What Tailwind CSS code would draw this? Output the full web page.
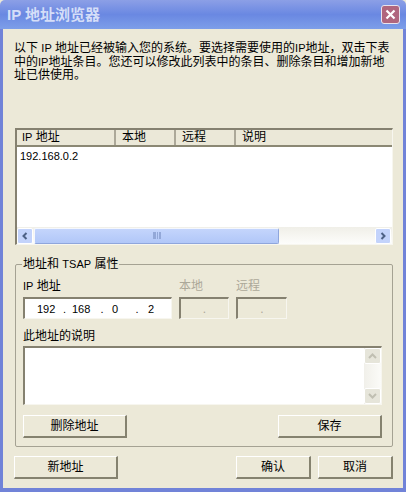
<!DOCTYPE html>
<html lang="zh">
<head>
    <meta charset="UTF-8">
    <meta name="viewport" content="width=device-width, initial-scale=1.0">
    <title>IP 地址浏览器</title>
    <script src="https://cdn.jsdelivr.net/npm/@tailwindcss/browser@4"></script>
</head>
<body class="bg-[#ece9d8] font-['Liberation_Sans','Noto_Sans_CJK_SC',sans-serif] text-[12px] leading-[14px] text-black">
    <div class="w-[406px] h-[492px] flex flex-col overflow-hidden">
        <!-- title bar -->
        <div class="h-[29px] shrink-0 flex items-center pl-[7px] pr-[6px] justify-between rounded-t-[5px] bg-gradient-to-b from-[#8c9fe6] via-[#6a88e2] to-[#7d9ee9]">
            <span class="text-[15px] font-bold text-[#d5def8] leading-[18px] whitespace-nowrap">IP 地址浏览器</span>
            <div class="w-[19px] h-[19px] rounded-[3px] border border-[#e8e4ee] bg-[#b0667e] flex items-center justify-center">
                <svg width="11" height="11" viewBox="0 0 11 11"><path d="M1.5 1.5l8 8M9.5 1.5l-8 8" stroke="#fff" stroke-width="2.2" fill="none"/></svg>
            </div>
        </div>

        <!-- client area -->
        <div class="flex-1 flex flex-col border-x-[3px] border-b-[4px] border-[#7183d8] pl-[11px] pr-[10px] pt-[13px]">
            <p class="whitespace-nowrap leading-[13.5px] h-[86px]">以下 <span class="text-[11px]">IP</span> 地址已经被输入您的系统。要选择需要使用的<span class="text-[11px]">IP</span>地址，双击下表<br>中的<span class="text-[11px]">IP</span>地址条目。您还可以修改此列表中的条目、删除条目和增加新地<br>址已供使用。</p>

            <!-- list -->
            <div class="ml-[1px] w-[378px] h-[117px] shrink-0 flex flex-col bg-white border-t-2 border-l-2 border-t-[#858170] border-l-[#858170] border-r border-b border-r-[#f7f6ef] border-b-[#f7f6ef]">
                <div class="h-[17px] shrink-0 flex bg-[#ebe8d8] border-b-2 border-[#8b8874]">
                    <div class="w-[99px] pl-[5px] border-r-2 border-[#aca899] leading-[15px]"><span class="text-[11px]">IP</span> 地址</div>
                    <div class="w-[60px] pl-[6px] border-r-2 border-[#aca899] leading-[15px]">本地</div>
                    <div class="w-[60px] pl-[6px] border-r-2 border-[#aca899] leading-[15px]">远程</div>
                    <div class="flex-1 pl-[6px] leading-[15px]">说明</div>
                </div>
                <div class="flex-1 pl-[3px] pt-[2px] text-[11px]">192.168.0.2</div>
                <!-- horizontal scrollbar -->
                <div class="h-[17px] shrink-0 flex items-center bg-gradient-to-b from-[#f0efe8] to-[#fdfdfb]">
                    <div class="w-[16px] h-[16px] shrink-0 rounded-[2px] border border-white bg-[#c3d3fb] flex items-center justify-center">
                        <svg width="8" height="8" viewBox="0 0 8 8"><path d="M5.5 1L2.5 4l3 3" stroke="#4d6185" stroke-width="2" fill="none"/></svg>
                    </div>
                    <div class="w-[245px] h-[16px] shrink-0 ml-[1px] rounded-[2px] border border-[#f4f7fe] border-r-[#8fa6dc] border-b-[#8fa6dc] bg-gradient-to-b from-[#c4d5fc] to-[#b1c7f8] flex items-center justify-center">
                        <div class="w-[8px] h-[7px] border-x-2 border-[#93a8d8] bg-[repeating-linear-gradient(90deg,#93a8d8_0,#93a8d8_1px,transparent_1px,transparent_2px)]"></div>
                    </div>
                    <div class="flex-1"></div>
                    <div class="w-[16px] h-[16px] shrink-0 rounded-[2px] border border-white bg-[#c3d3fb] flex items-center justify-center mr-[1px]">
                        <svg width="8" height="8" viewBox="0 0 8 8"><path d="M2.5 1l3 3-3 3" stroke="#4d6185" stroke-width="2" fill="none"/></svg>
                    </div>
                </div>
            </div>

            <!-- group box -->
            <div class="relative mt-[19px] ml-[1px] w-[378px] h-[183px] shrink-0 border border-[#a5a293] rounded-[2px] pl-[7px] pr-[10px] pt-[14px]">
                <span class="absolute left-[6px] top-[-8px] bg-[#ece9d8] px-[1px] whitespace-nowrap">地址和 <span class="text-[11px]">TSAP</span> 属性</span>
                <div class="flex gap-[7px]">
                    <div class="w-[149px]">
                        <div class="h-[18px] leading-[14px]"><span class="text-[11px]">IP</span> 地址</div>
                        <div class="h-[22px] flex items-center pl-[12px] text-[11px] bg-white border-t-2 border-l-2 border-t-[#858170] border-l-[#858170] border-r border-b border-r-[#f7f6ef] border-b-[#f7f6ef]">
                            <span class="w-[20px]">192</span><span class="w-[15px] text-center">.</span><span class="w-[20px]">168</span><span class="w-[20px] text-center">.</span><span class="w-[14px]">0</span><span class="w-[22px] text-center">.</span><span>2</span>
                        </div>
                    </div>
                    <div class="w-[50px]">
                        <div class="h-[18px] text-[#aca899] leading-[14px]">本地</div>
                        <div class="h-[22px] flex items-center justify-center text-[#aca899] border-t-2 border-l-2 border-t-[#858170] border-l-[#858170] border-r border-b border-r-[#f7f6ef] border-b-[#f7f6ef]">.</div>
                    </div>
                    <div class="w-[51px]">
                        <div class="h-[18px] text-[#aca899] leading-[14px]">远程</div>
                        <div class="h-[22px] flex items-center justify-center text-[#aca899] border-t-2 border-l-2 border-t-[#858170] border-l-[#858170] border-r border-b border-r-[#f7f6ef] border-b-[#f7f6ef]">.</div>
                    </div>
                </div>
                <div class="mt-[10px] h-[17px] leading-[14px]">此地址的说明</div>
                <div class="w-[359px] h-[59px] flex justify-end bg-white border-t-2 border-l-2 border-t-[#858170] border-l-[#858170] border-r border-b border-r-[#f7f6ef] border-b-[#f7f6ef]">
                    <div class="w-[17px] flex flex-col justify-between bg-gradient-to-r from-[#f1f0ea] to-[#fbfbf8]">
                        <div class="h-[16px] rounded-[2px] border border-white bg-[#e6e5da] flex items-center justify-center">
                            <svg width="9" height="8" viewBox="0 0 9 8"><path d="M1 6l3.5-3.5L8 6" stroke="#c0bfb2" stroke-width="2" fill="none"/></svg>
                        </div>
                        <div class="h-[16px] rounded-[2px] border border-white bg-[#e6e5da] flex items-center justify-center">
                            <svg width="9" height="8" viewBox="0 0 9 8"><path d="M1 2l3.5 3.5L8 2" stroke="#c0bfb2" stroke-width="2" fill="none"/></svg>
                        </div>
                    </div>
                </div>
                <div class="mt-[10px] flex justify-between w-[359px]">
                    <div class="w-[104px] h-[23px] flex items-center justify-center bg-[#ece9d8] border-t border-l border-white border-r-2 border-b-2 border-r-[#85826f] border-b-[#85826f]">删除地址</div>
                    <div class="w-[104px] h-[23px] flex items-center justify-center bg-[#ece9d8] border-t border-l border-white border-r-2 border-b-2 border-r-[#85826f] border-b-[#85826f]">保存</div>
                </div>
            </div>

            <!-- bottom buttons -->
            <div class="mt-[9px] w-[379px] flex">
                <div class="w-[104px] h-[23px] flex items-center justify-center bg-[#ece9d8] border-t border-l border-white border-r-2 border-b-2 border-r-[#85826f] border-b-[#85826f]">新地址</div>
                <div class="flex-1"></div>
                <div class="w-[75px] h-[23px] flex items-center justify-center bg-[#ece9d8] border-t border-l border-white border-r-2 border-b-2 border-r-[#85826f] border-b-[#85826f]">确认</div>
                <div class="ml-[7px] w-[75px] h-[23px] flex items-center justify-center bg-[#ece9d8] border-t border-l border-white border-r-2 border-b-2 border-r-[#85826f] border-b-[#85826f]">取消</div>
            </div>
        </div>
    </div>
</body>
</html>
